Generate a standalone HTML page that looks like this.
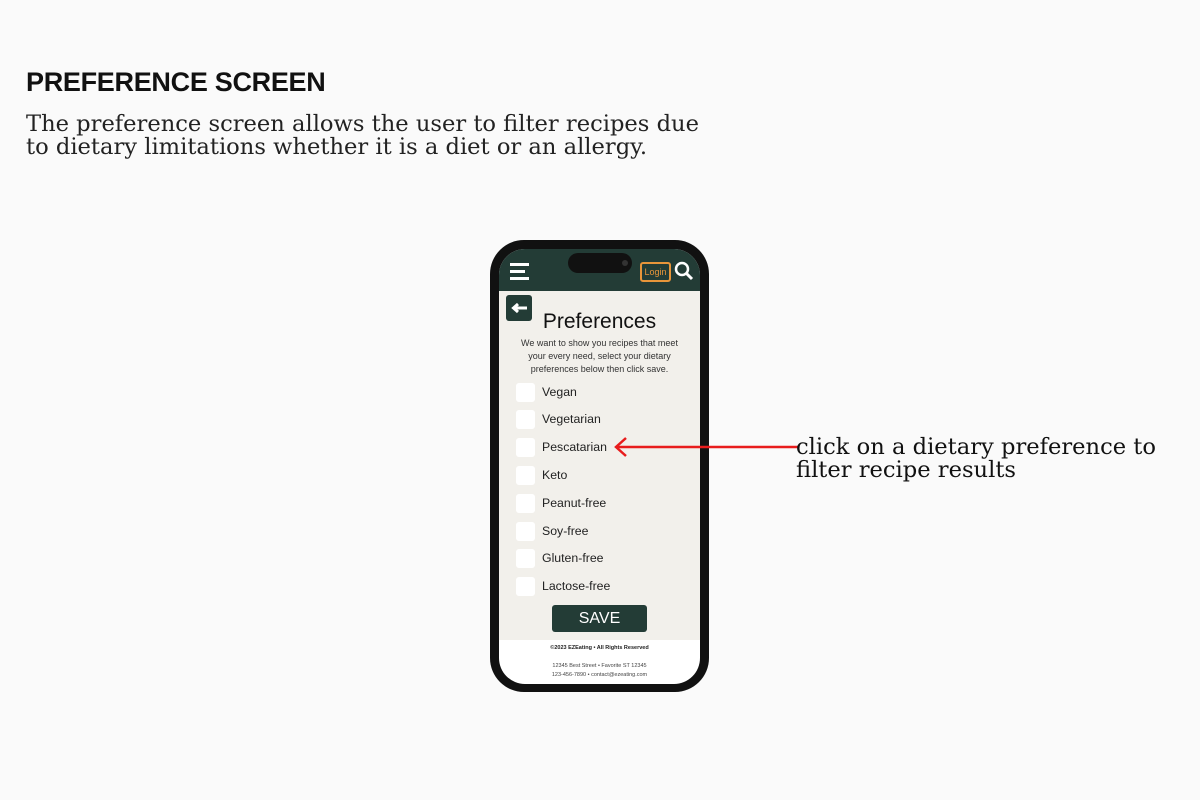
<!DOCTYPE html><html><head><style>
body{margin:0;width:1200px;height:800px;background:#fafafa;position:relative;overflow:hidden;font-family:"Liberation Sans",sans-serif}
.a{position:absolute}
h1{position:absolute;left:26px;top:67px;margin:0;font-size:27px;letter-spacing:-0.3px;font-weight:bold;color:#111}
.d{left:26px;top:113px;font-family:"DejaVu Serif",serif;font-size:22.6px;line-height:23px;color:#222;white-space:nowrap}
.row{position:absolute;left:516px;width:160px;height:20px}
.row i{position:absolute;left:0;top:0;width:19px;height:19px;background:#fff;border-radius:3px}
.row span{position:absolute;left:26px;top:2px;font-size:12.3px;color:#222}
</style></head><body>
<h1>PREFERENCE SCREEN</h1>
<div class="a d">The preference screen allows the user to filter recipes due<br>to dietary limitations whether it is a diet or an allergy.</div>
<div class="a" style="left:490px;top:240px;width:219px;height:452px;background:#111;border-radius:34px"></div>
<div class="a" style="left:499px;top:249px;width:201px;height:435px;background:#fff;border-radius:26px;overflow:hidden">
 <div class="a" style="left:0;top:0;width:201px;height:42px;background:#233c36"></div>
 <div class="a" style="left:0;top:42px;width:201px;height:349px;background:#f2f0eb"></div>
 <div class="a" style="left:69px;top:4px;width:64px;height:20px;background:#111;border-radius:10px"></div>
 <div class="a" style="left:123px;top:11px;width:6px;height:6px;background:#333;border-radius:3px"></div>
 <div class="a" style="left:11px;top:14px;width:19px;height:2.5px;background:#fff"></div>
 <div class="a" style="left:11px;top:21px;width:15px;height:2.5px;background:#fff"></div>
 <div class="a" style="left:11px;top:28px;width:19px;height:2.5px;background:#fff"></div>
 <div class="a" style="left:141px;top:13px;width:31px;height:20px;border:2px solid #e8953a;border-radius:3px;box-sizing:border-box;color:#e8953a;font-size:9px;text-align:center;line-height:16px">Login</div>
 <svg class="a" style="left:175px;top:12px" width="20" height="20"><circle cx="8" cy="8" r="6" stroke="#fff" stroke-width="2.5" fill="none"/><path d="M12 12L18 18" stroke="#fff" stroke-width="3"/></svg>
 <div class="a" style="left:7px;top:46px;width:26px;height:26px;background:#233c36;border-radius:3px"></div>
 <svg class="a" style="left:7px;top:46px" width="26" height="26"><path d="M8 13H21M12 9L7.5 13L12 17" stroke="#fff" stroke-width="3" fill="none"/></svg>
 <div class="a" style="left:0;top:61px;width:201px;text-align:center;font-size:21px;color:#111">Preferences</div>
 <div class="a" style="left:0;top:88px;width:201px;text-align:center;font-size:9px;line-height:13px;color:#333">We want to show you recipes that meet<br>your every need, select your dietary<br>preferences below then click save.</div>
 <div class="a" style="left:53px;top:356px;width:95px;height:27px;background:#233c36;border-radius:3px;color:#fff;font-size:16px;text-align:center;line-height:28px">SAVE</div>
 <div class="a" style="left:0;top:396px;width:201px;text-align:center;font-size:5.5px;font-weight:bold;color:#222">©2023 EZEating • All Rights Reserved</div>
 <div class="a" style="left:0;top:413px;width:201px;text-align:center;font-size:5.5px;line-height:9px;color:#444">12345 Best Street • Favorite ST 12345<br>123-456-7890 • contact@ezeating.com</div>
</div>
<div class="row" style="top:383px"><i></i><span>Vegan</span></div>
<div class="row" style="top:410px"><i></i><span>Vegetarian</span></div>
<div class="row" style="top:438px"><i></i><span>Pescatarian</span></div>
<div class="row" style="top:466px"><i></i><span>Keto</span></div>
<div class="row" style="top:494px"><i></i><span>Peanut-free</span></div>
<div class="row" style="top:522px"><i></i><span>Soy-free</span></div>
<div class="row" style="top:549px"><i></i><span>Gluten-free</span></div>
<div class="row" style="top:577px"><i></i><span>Lactose-free</span></div>
<svg class="a" style="left:610px;top:435px" width="190" height="25"><path d="M6 12H188M16 3L6 12L16 21" stroke="#e81c1c" stroke-width="2.5" fill="none"/></svg>
<div class="a" style="left:796px;top:436px;font-family:'DejaVu Serif',serif;font-size:22.6px;line-height:23px;color:#111;white-space:nowrap">click on a dietary preference to<br>filter recipe results</div>
</body></html>
